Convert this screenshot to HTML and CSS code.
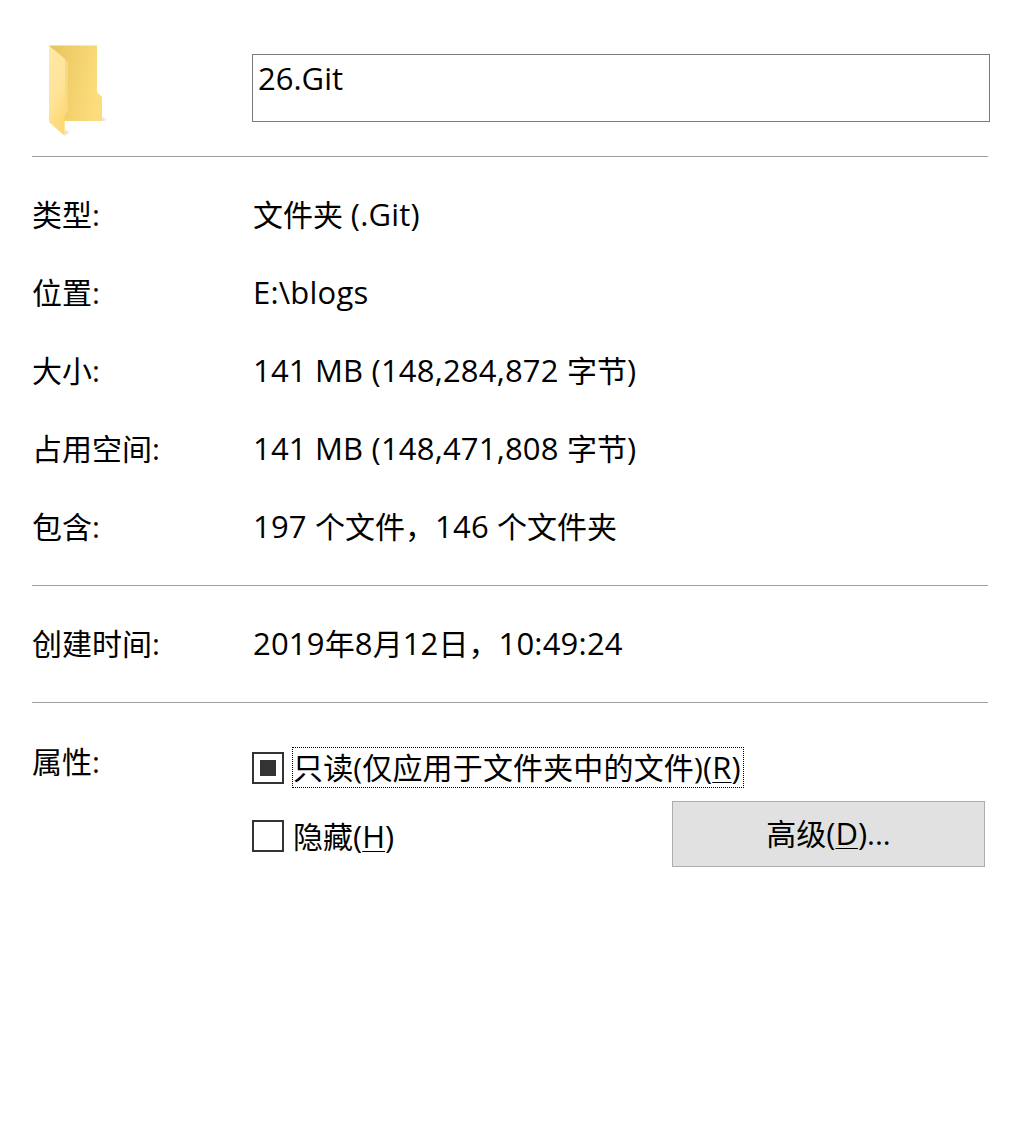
FILE: index.html
```html
<!DOCTYPE html>
<html lang="zh-CN">
<head>
  <meta charset="UTF-8">
  <meta name="viewport" content="width=device-width, initial-scale=1.0">
  <title>26.Git 属性</title>
  <link rel="stylesheet" href="styles.css">
</head>
<body>
  <div class="properties">
    <div class="header">
      <svg class="folder" width="64" height="96" viewBox="0 0 64 96">
        <defs>
          <linearGradient id="back" x1="0" y1="0" x2="1" y2="0.25">
            <stop offset="0" stop-color="#e8c35c"/>
            <stop offset="1" stop-color="#fcdc7c"/>
          </linearGradient>
          <linearGradient id="front" x1="0" y1="0" x2="0.35" y2="1">
            <stop offset="0" stop-color="#ffe9a6"/>
            <stop offset="0.6" stop-color="#ffe49a"/>
            <stop offset="1" stop-color="#fdda78"/>
          </linearGradient>
          <linearGradient id="shadow" x1="0" y1="0" x2="1" y2="0">
            <stop offset="0" stop-color="#dddddd"/>
            <stop offset="1" stop-color="#ffffff"/>
          </linearGradient>
        </defs>
        <path d="M53 73 L60 75 L57 77 L53 77 Z" fill="url(#shadow)"/>
        <path d="M17 86 L23 88 L20 90 L17 91 Z" fill="url(#shadow)"/>
        <path d="M1 1.500 H49 V48 L54 53 V77 H16 V30 Z" fill="url(#back)"/>
        <path d="M1 1.500 L17 15 V71 L16.700 72 V92 L1 78 Z" fill="url(#front)"/>
        <path d="M17 15 L19.800 18 V67 L17 71 Z" fill="#f8da83"/>
      </svg>
      <input class="name" type="text" value="26.Git">
    </div>

    <dl class="section details">
      <dt>类型:</dt>
      <dd>文件夹 <span class="latin">(.Git)</span></dd>
      <dt>位置:</dt>
      <dd><span class="latin">E:\blogs</span></dd>
      <dt>大小:</dt>
      <dd><span class="latin">141 MB (148,284,872 </span>字节<span class="latin">)</span></dd>
      <dt>占用空间:</dt>
      <dd><span class="latin">141 MB (148,471,808 </span>字节<span class="latin">)</span></dd>
      <dt>包含:</dt>
      <dd><span class="latin">197 </span>个文件，<span class="latin">146 </span>个文件夹</dd>
    </dl>

    <dl class="section created">
      <dt>创建时间:</dt>
      <dd><span class="latin">2019</span>年<span class="latin">8</span>月<span class="latin">12</span>日，<span class="latin">10:49:24</span></dd>
    </dl>

    <div class="section attributes">
      <div class="title">属性:</div>
      <div class="options">
        <div class="option">
          <span class="checkbox mixed"></span>
          <span class="text focused">只读(仅应用于文件夹中的文件)<span class="latin">(<u>R</u>)</span></span>
        </div>
        <div class="option-row">
          <div class="option">
            <span class="checkbox"></span>
            <span class="text">隐藏<span class="latin">(<u>H</u>)</span></span>
          </div>
          <button class="advanced">高级<span class="latin">(<u>D</u>)</span>...</button>
        </div>
      </div>
    </div>
  </div>
</body>
</html>
```
FILE: styles.css
```css
* {
  box-sizing: border-box;
}

body {
  margin: 0;
  background: #ffffff;
  color: #000000;
  font-family: "Open Sans", "Noto Sans CJK SC", sans-serif;
  font-size: 30px;
  line-height: 40px;
}

.properties {
  padding: 40px 34px 0 32px;
}

.header {
  display: flex;
  height: 116px;
  padding-left: 16px;
}

.folder {
  margin: 4px 140px 0 0;
}

.name {
  flex: 1;
  min-width: 0;
  height: 68px;
  margin: 14px -2px 0 0;
  padding: 0 5px 20px;
  border: 1px solid #7a7a7a;
  border-radius: 0;
  outline: none;
  background: #ffffff;
  color: #000000;
  font: inherit;
  font-size: 31px;
}

/* western glyphs run a little larger than the CJK ones */
.latin {
  font-size: 31px;
  line-height: 1;
}

.section {
  margin: 0;
  border-top: 1px solid #a0a0a0;
}

.details,
.created {
  display: grid;
  grid-template-columns: 221px 1fr;
  grid-auto-rows: 78px;
  align-items: center;
}

.details {
  height: 429px;
  padding-top: 19px;
}

.created {
  height: 117px;
  padding-top: 19px;
}

dd {
  margin: 0;
}

dd .latin {
  letter-spacing: 0.2px;
}

dt,
dd,
.title,
.text {
  white-space: nowrap;
}

.attributes {
  display: grid;
  grid-template-columns: 220px 1fr;
  padding-top: 39px;
}

.options {
  padding-top: 5px;
}

.option {
  display: flex;
  align-items: center;
}

.checkbox {
  width: 32px;
  height: 32px;
  margin-right: 8px;
  border: 2px solid #333333;
  background: #ffffff;
}

.mixed {
  padding: 6px;
  background: #333333 content-box;
}

.text {
  height: 41px;
  padding-left: 1px;
  line-height: 42px;
}

.focused {
  width: 452px;
  letter-spacing: 0.15px;
  outline: 1px dotted #000000;
  outline-offset: -1px;
}

u {
  text-decoration-thickness: 1px;
  text-underline-offset: 3px;
}

.option-row {
  display: flex;
  justify-content: space-between;
  align-items: center;
  margin: 13px 3px 0 0;
}

.option-row .option {
  padding-top: 4px;
}

.advanced {
  width: 313px;
  height: 66px;
  padding: 0;
  border: 1px solid #adadad;
  background: #e1e1e1;
  color: #000000;
  font: inherit;
}
```
